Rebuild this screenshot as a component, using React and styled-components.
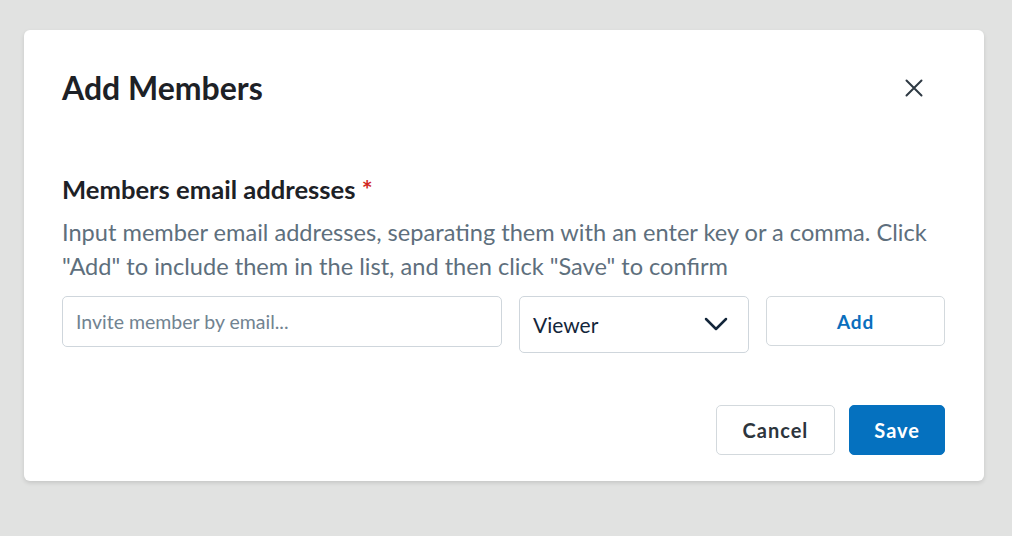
import styled, { createGlobalStyle } from "styled-components";

const GlobalStyle = createGlobalStyle`
  html, body {
    margin: 0;
    padding: 0;
    background: #e1e2e1;
    font-family: Lato, "Open Sans", sans-serif;
  }
  * { box-sizing: border-box; }
`;

const App = () => {
  return (
    <Page>
      <GlobalStyle />
      <Modal>
        <Header>
          <Title>Add Members</Title>
          <CloseButton aria-label="Close">
            <svg width="18" height="18" viewBox="0 0 18 18" fill="none">
              <path d="M1.5 1.5L16.5 16.5M16.5 1.5L1.5 16.5" stroke="#2f3a44" strokeWidth="2" strokeLinecap="round" />
            </svg>
          </CloseButton>
        </Header>

        <Field>
          <Label>
            Members email addresses <Required>*</Required>
          </Label>
          <Hint>
            Input member email addresses, separating them with an enter key or a comma. Click
            "Add" to include them in the list, and then click "Save" to confirm
          </Hint>
          <InputRow>
            <EmailInput placeholder="Invite member by email..." />
            <Select>
              <span>Viewer</span>
              <svg width="24" height="15" viewBox="0 0 24 15" fill="none">
                <path d="M2 2L12 12L22 2" stroke="#13263a" strokeWidth="2.5" strokeLinecap="round" strokeLinejoin="round" />
              </svg>
            </Select>
            <Button $variant="outline">Add</Button>
          </InputRow>
        </Field>

        <Footer>
          <Button $variant="secondary">Cancel</Button>
          <Button $variant="primary">Save</Button>
        </Footer>
      </Modal>
    </Page>
  );
};

const Page = styled.div`
  padding: 30px 28px 55px 24px;
  min-height: 536px;
`;

const Modal = styled.div`
  width: 960px;
  background: #ffffff;
  border-radius: 6px;
  box-shadow: 0 2px 4px rgba(0, 0, 0, 0.12);
  padding: 38px 39px 26px 38px;
`;

const Header = styled.div`
  display: flex;
  align-items: center;
  justify-content: space-between;
`;

const Title = styled.h1`
  margin: 0;
  font-size: 32px;
  font-weight: 700;
  line-height: 40px;
  color: #1d2126;
`;

const CloseButton = styled.button`
  border: none;
  background: none;
  padding: 0;
  margin-right: 22px;
  width: 18px;
  height: 18px;
  display: flex;
  align-items: center;
  justify-content: center;
  cursor: pointer;
`;

const Field = styled.div`
  margin-top: 66px;
`;

const Label = styled.div`
  font-size: 25.6px;
  font-weight: 700;
  line-height: 30px;
  color: #1d2126;
`;

const Required = styled.span`
  color: #d0271d;
`;

const Hint = styled.p`
  margin: 11px 0 13px;
  font-size: 23.6px;
  line-height: 34px;
  color: #5e6f7d;
`;

const InputRow = styled.div`
  display: flex;
  align-items: flex-start;
  gap: 17px;
`;

const EmailInput = styled.input`
  flex: 1;
  min-width: 0;
  height: 51px;
  border: 1px solid #cfd6dc;
  border-radius: 5px;
  padding: 0 13px;
  font-family: inherit;
  font-size: 19.5px;
  color: #1d2126;
  outline: none;

  &::placeholder {
    color: #718391;
  }
`;

const Select = styled.div`
  width: 230px;
  height: 57px;
  border: 1px solid #cfd6dc;
  border-radius: 5px;
  padding: 0 20px 0 13px;
  display: flex;
  align-items: center;
  justify-content: space-between;
  font-size: 21px;
  color: #13263a;
`;

const Button = styled.button`
  height: 50px;
  border-radius: 5px;
  font-family: inherit;
  font-size: ${(p) => (p.$variant === "outline" ? "19px" : "20px")};
  font-weight: 700;
  letter-spacing: ${(p) => (p.$variant === "outline" ? "0.8px" : "1px")};
  cursor: pointer;
  border: 1px solid ${(p) => (p.$variant === "primary" ? "#0571bf" : "#d3d9dd")};
  background: ${(p) => (p.$variant === "primary" ? "#0571bf" : "#ffffff")};
  color: ${(p) =>
    p.$variant === "primary" ? "#ffffff" : p.$variant === "outline" ? "#0a6ebd" : "#2d353d"};
  width: ${(p) => (p.$variant === "outline" ? "179px" : "auto")};
  padding: ${(p) =>
    p.$variant === "outline" ? "0" : p.$variant === "primary" ? "0 24px" : "0 26px"};
`;

const Footer = styled.div`
  display: flex;
  justify-content: flex-end;
  gap: 14px;
  margin-top: 52px;
`;

export default App;
